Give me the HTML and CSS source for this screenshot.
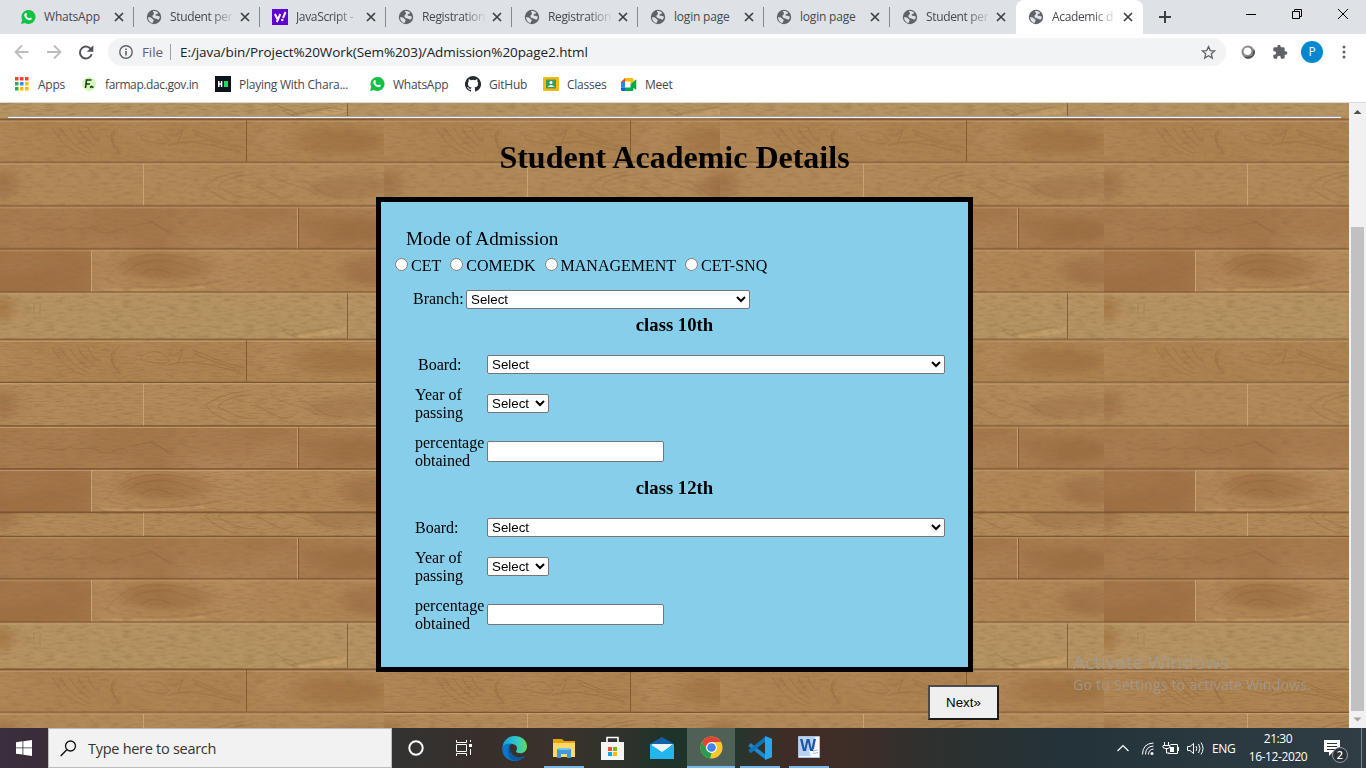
FILE: index.html
```html
<!DOCTYPE html>
<html lang="en">
<head>
<meta charset="utf-8">
<title>Academic details</title>
<link rel="stylesheet" href="styles.css">
</head>
<body>
<svg class="defs" width="0" height="0">
  <defs>
    <symbol id="globe" viewBox="0 0 16 16"><circle cx="8" cy="8" r="7.2" fill="#5f6368"/><path d="M2 8.3C3.6 8 5.2 8.3 6 9.4c.5.9 1.700.7 1.700 1.700 0 1.100-.8 1.600-1 3C3.800 13.700 2 11.200 2 8.300zM6.800 2.200c1.900-.5 4.100.2 5.400 1.500-.5 1.300-1.700.9-2.500 1.700-.6.8.4 1.500 1.500 1.300 1.200-.2 1.600.8 2.700.9-.1 1.200-.4 2.100-1 2.900-1.300.1-2.200-.8-3.500-1.100-1.600-.2-2.900-.8-3-2.200 0-1.200 1-1.500 1.600-2.200.4-.8-.6-1.500-1.200-2.800z" fill="#dee1e6"/></symbol>
    <symbol id="close" viewBox="0 0 10 10"><path d="M1 1l8 8M9 1L1 9" stroke="#3c4043" stroke-width="1.700" fill="none"/></symbol>
    <symbol id="whatsapp" viewBox="0 0 16 16"><path d="M1 15l1.200-4A7 7 0 1 1 5 14z" fill="#12c245"/><path d="M5.300 4.200c.8-.5 1.300.3 1.600 1.200.2.600-.8 1-.5 1.500.6 1.100 1.400 1.900 2.500 2.300.600.2 1-1 1.500-.7 1.400.7 1.600.9 1.300 1.600-.6 1.400-2.300 1.400-3.800.7C5.800 9.800 4.500 8 4.300 6.500c-.1-.9.300-1.800 1-2.300z" fill="#fff"/></symbol>

    <filter id="grain" filterUnits="userSpaceOnUse" x="0" y="0" width="384" height="220">
      <feTurbulence type="fractalNoise" baseFrequency="0.09 0.6" numOctaves="4" seed="8" result="n"/>
      <feColorMatrix in="n" type="matrix" values="0 0 0 0 0.27  0 0 0 0 0.15  0 0 0 0 0.06  1.200 0 0 0 -0.52"/>
    </filter>
    <filter id="cloud" filterUnits="userSpaceOnUse" x="0" y="0" width="384" height="220">
      <feTurbulence type="fractalNoise" baseFrequency="0.011 0.02" numOctaves="2" seed="21" result="n"/>
      <feColorMatrix in="n" type="matrix" values="0 0 0 0 0.500  0 0 0 0 0.290  0 0 0 0 0.130  1.100 0 0 0 -0.44"/>
    </filter>
    <filter id="soft"><feGaussianBlur stdDeviation="7 3"/></filter>
    <g id="planks">
      <rect width="384" height="43" fill="#ad8350"/>
      <rect y="43" width="384" height="44" fill="#b18a58"/>
      <rect y="87" width="384" height="43" fill="#a5784a"/>
      <rect y="130" width="91" height="43" fill="#a07043"/>
      <rect x="91" y="130" width="293" height="43" fill="#b08654"/>
      <rect y="173" width="384" height="47" fill="#b69562"/>
      <g filter="url(#soft)">
        <ellipse cx="335" cy="22" rx="50" ry="12" fill="#97683a" opacity=".5"/>
        <ellipse cx="350" cy="68" rx="42" ry="11" fill="#8d6036" opacity=".5"/>
        <ellipse cx="345" cy="110" rx="45" ry="13" fill="#94653a" opacity=".4"/>
        <ellipse cx="165" cy="147" rx="48" ry="13" fill="#946439" opacity=".5"/>
        <ellipse cx="370" cy="150" rx="28" ry="15" fill="#946439" opacity=".55"/>
        <ellipse cx="3" cy="65" rx="13" ry="14" fill="#94653a" opacity=".6"/>
        <ellipse cx="2" cy="190" rx="12" ry="12" fill="#a4733f" opacity=".8"/>
      </g>
      <g fill="none" stroke="#76502b" stroke-width=".8" opacity=".4">
        <path d="M52 8c9 15 18 24 34 28M60 8c8 13 17 20 29 26M69 8c7 11 14 17 22 22M78 8c5 10 10 14 17 18M88 8c3 8 6 11 12 13M120 6q-15 14 0 28M115 9q-8 10 0 19M141 17q15-10 25 0t-18 5q-9-2-7-5M175 16l8-6-5 13M192 10c20 8 36 16 53 18M194 14c16 7 26 10 42 15M168 26c22-8 40 0 72 6"/>
        <path d="M205 66q15-12 39-14M205 66q14 15 32 17M218 66q12-10 35-11M218 67q20 13 39 12M250 66c16 0 25 17 42 11M270 55c19 13 30 9 47 20M298 60c20 4 16 17 45 17"/>
        <path d="M33 112c14-9 24 5 37-5 11 8 17-4 29 5 13 7 20-10 29 1M130 107l23-5 17 13M149 102l24 12"/>
        <path d="M105 160q20-25 50-25t64 13q30 4 25 7t-31 8-53 5q-35 0-55-8M122 156q14-15 37-15 22 0 41 11M140 155q15-10 30-1"/>
        <path d="M34 184v10M40 184v12M277 205c10 8 14 3 22 12M282 211l15 7M292 215l45-8"/>
      </g>
      <g fill="#d0a870" opacity=".5"><path d="M285 219l55-11 6-2v7l-30 5zM98 168q60 4 104-2l4 3q-50 4-102 2z"/></g>
      <rect width="384" height="220" filter="url(#cloud)"/>
      <rect width="384" height="220" filter="url(#grain)"/>
      <g stroke="#704a2b" stroke-width="1.300" opacity=".8"><path d="M0 .2h384M0 42.800h384M0 86.500h384M0 129.500h384M0 172.700h384M0 219.800h384"/></g>
      <g stroke="#d6ae84" stroke-width="1" opacity=".7"><path d="M0 1.600h384M0 44.300h384M0 87.900h384M0 130.900h384M0 174h384M143.500 44v42M297.500 88v41M91.500 131v41"/></g>
      <g stroke="#6d4726" stroke-width="1" opacity=".65"><path d="M246.500 1v41M298.500 88v41M347.500 174v45"/></g>
    </g>
    <g id="course">
      <use href="#planks"/>
      <svg x="384" width="336" height="220"><use href="#planks"/></svg>
      <use href="#planks" x="720"/>
      <svg x="1104" width="245" height="220"><use href="#planks"/></svg>
    </g>
  </defs>
</svg>

<header class="tabs">
  <div class="tab"><svg class="fav"><use href="#whatsapp"/></svg><span>WhatsApp</span><svg class="x"><use href="#close"/></svg></div>
  <div class="tab"><svg class="fav"><use href="#globe"/></svg><span class="fade">Student per</span><svg class="x"><use href="#close"/></svg></div>
  <div class="tab"><svg class="fav" viewBox="0 0 16 16"><rect width="16" height="16" fill="#5f01d1"/><path d="M3 5l2.400 5M8.300 5L4.800 13" stroke="#fff" stroke-width="2"/><path d="M13.500 3L11 9" stroke="#fff" stroke-width="2"/><circle cx="10.300" cy="11" r="1.200" fill="#fff"/></svg><span class="fade">JavaScript -</span><svg class="x"><use href="#close"/></svg></div>
  <div class="tab"><svg class="fav"><use href="#globe"/></svg><span class="fade">Registration</span><svg class="x"><use href="#close"/></svg></div>
  <div class="tab"><svg class="fav"><use href="#globe"/></svg><span class="fade">Registration</span><svg class="x"><use href="#close"/></svg></div>
  <div class="tab"><svg class="fav"><use href="#globe"/></svg><span>login page</span><svg class="x"><use href="#close"/></svg></div>
  <div class="tab"><svg class="fav"><use href="#globe"/></svg><span>login page</span><svg class="x"><use href="#close"/></svg></div>
  <div class="tab last"><svg class="fav"><use href="#globe"/></svg><span class="fade">Student per</span><svg class="x"><use href="#close"/></svg></div>
  <div class="tab active"><svg class="fav"><use href="#globe"/></svg><span class="fade">Academic d</span><svg class="x"><use href="#close"/></svg></div>
  <svg class="plus" viewBox="0 0 12 12"><path d="M6 0v12M0 6h12" stroke="#3c4043" stroke-width="2"/></svg>
  <svg class="winbtns" width="103" height="28" viewBox="0 0 103 28"><path d="M3 14.500h10" stroke="#000"/><path d="M49.500 11.500h7v7h-7zM51.500 11V9.500h7v7H57M95 9l10 10M105 9L95 19" stroke="#000" fill="none"/></svg>
</header>

<div class="toolbar">
  <svg class="nav" width="90" height="20" viewBox="0 0 90 20"><g fill="none" stroke="#babcbe" stroke-width="1.800"><path d="M21.500 10H9M15 3.500L8.500 10l6.500 6.500M40 10h13M47 3.500l6.500 6.500-6.500 6.500"/></g><path d="M84.800 7.500A6 6 0 1 0 85.200 12" stroke="#50545a" stroke-width="2" fill="none" transform="translate(-.5 .3)" /><path d="M86.300 3v6.500h-6.500z" fill="#50545a" transform="translate(0 .3)"/></svg>
  <div class="omnibox">
    <svg width="14" height="14" viewBox="0 0 14 14"><circle cx="7" cy="7" r="6.200" fill="none" stroke="#5f6368" stroke-width="1.400"/><path d="M7 6v4.500M7 3.500v1.500" stroke="#5f6368" stroke-width="1.600"/></svg>
    <span class="file">File</span><i class="bar"></i><span class="url">E:/java/bin/Project%20Work(Sem%203)/Admission%20page2.html</span>
    <svg class="star" width="15" height="15" viewBox="0 0 16 16"><path d="M8 1.700l1.900 4.200 4.600.4-3.500 3.100 1 4.500-4-2.400-4 2.400 1-4.500L1.500 6.300l4.600-.4z" fill="none" stroke="#5f6368" stroke-width="1.400"/></svg>
  </div>
  <svg class="ext1" width="14" height="14" viewBox="0 0 14 14"><circle cx="7" cy="7" r="6.500" fill="#8a8a8a"/><path d="M13 4A6.500 6.500 0 0 1 3 12l8-1z" fill="#505050"/><circle cx="6.500" cy="6.300" r="3.800" fill="#fff"/></svg>
  <svg class="ext2" width="16" height="16" viewBox="0 0 24 24"><path fill="#5f6368" d="M20.500 11H19V7c0-1.100-.9-2-2-2h-4V3.500a2.500 2.500 0 0 0-5 0V5H4c-1.100 0-2 .9-2 2v3.800h1.500a2.700 2.700 0 0 1 0 5.400H2V20c0 1.100.9 2 2 2h3.800v-1.500a2.700 2.700 0 0 1 5.400 0V22H17c1.100 0 2-.9 2-2v-4h1.500a2.500 2.500 0 0 0 0-5z"/></svg>
  <span class="avatar">P</span>
  <svg class="dots" width="4" height="14" viewBox="0 0 4 14"><g fill="#5f6368"><circle cx="2" cy="2" r="1.500"/><circle cx="2" cy="7" r="1.500"/><circle cx="2" cy="12" r="1.500"/></g></svg>
</div>

<nav class="bookmarks">
  <a class="b1"><svg width="14" height="14" viewBox="0 0 14 14"><path fill="#ea4335" d="M0 0h3.500v3.500H0zM5 0h3.500v3.500H5zM10 0h3.500v3.500H10z"/><path fill="#34a853" d="M0 5h3.500v3.500H0zM0 10h3.500v3.500H0z"/><path fill="#4285f4" d="M5 5h3.500v3.500H5z"/><path fill="#fbbc04" d="M10 5h3.500v3.500H10zM5 10h3.500v3.500H5zM10 10h3.500v3.500H10z"/></svg><span>Apps</span></a>
  <a class="b2"><svg width="14" height="14" viewBox="0 0 14 14"><circle cx="7" cy="7" r="7" fill="#d5f7bb"/><path d="M3.500 11l1-8h5M4 7h4M8 10.500l1.500-1 2 1" stroke="#173f16" stroke-width="1.600" fill="none"/></svg><span>farmap.dac.gov.in</span></a>
  <a class="b3"><svg width="16" height="16" viewBox="0 0 16 16"><path fill="#0e141e" d="M0 0h16v16H0z"/><path d="M3.800 5v6M6.600 5v6M4 8h3" stroke="#fff" stroke-width="1.500"/><path fill="#1dde60" d="M9 5h4v6H9z"/></svg><span>Playing With Chara...</span></a>
  <a class="b4"><svg width="16" height="16"><use href="#whatsapp"/></svg><span>WhatsApp</span></a>
  <a class="b5"><svg width="16" height="16" viewBox="0 0 16 16"><path fill="#24292e" d="M8 0a8 8 0 0 0-2.530 15.590c.4.070.550-.170.550-.380v-1.490c-2.010.370-2.530-.490-2.690-.940-.090-.230-.480-.940-.820-1.130-.280-.150-.680-.520-.010-.530.630-.010 1.080.580 1.230.820.720 1.210 1.870.870 2.330.660.070-.520.280-.870.510-1.070-1.780-.2-3.640-.890-3.640-3.950 0-.870.310-1.590.820-2.150-.080-.2-.360-1.020.080-2.120 0 0 .670-.210 2.200.820a7.400 7.400 0 0 1 4 0c1.530-1.040 2.200-.820 2.200-.820.440 1.100.160 1.920.080 2.120.510.560.820 1.270.820 2.150 0 3.070-1.870 3.750-3.650 3.950.290.250.540.730.540 1.480v2.200c0 .210.150.460.550.380A8 8 0 0 0 8 0z"/></svg><span>GitHub</span></a>
  <a class="b6"><svg width="16" height="14" viewBox="0 0 16 14"><rect width="16" height="14" rx="1" fill="#f8bc08"/><rect x="3" y="2.500" width="10" height="9" fill="#3c9a5c"/><circle cx="8" cy="5.500" r="1.500" fill="#fff"/><path d="M4.500 10q3.500-4 7 0z" fill="#fff"/></svg><span>Classes</span></a>
  <a class="b7"><svg width="16" height="13" viewBox="0 0 16 13"><path fill="#ea4335" d="M0 4l4-4v4z"/><path fill="#fbbc04" d="M4 0h7q1.500 0 1.500 1.500V6l-3 1V3.500H4z"/><path fill="#2684fc" d="M0 4h4v5.500H0z"/><path fill="#0066da" d="M0 9.500h4V13H1.500Q0 13 0 11.500z"/><path fill="#00ac47" d="M4 9.500h5.500v-3l5-4.800q.8-.4.8.4v9q0 .8-.8.300l-2-1.700v2q0 1.300-1.500 1.300H4z"/></svg><span>Meet</span></a>
</nav>

<main class="viewport">
  <div class="page">
    <svg class="wood" width="1349" height="625" viewBox="0 103 1349 625">
      <use href="#course" y="-100.500"/>
      <use href="#course" y="119.500"/>
      <use href="#course" y="449.500"/>
      <svg x="0" y="339.500" width="1349" height="173" viewBox="0 0 1349 173"><use href="#course"/></svg>
      <svg x="0" y="512.500" width="1349" height="24.500" viewBox="0 62.500 1349 24.500"><use href="#course"/></svg>
      <path d="M0 512.700h1349" stroke="#704a2b" stroke-width="1.200" opacity=".7"/>
      <use href="#course" y="669.500"/>
    </svg>
    <div class="content">
      <div class="rule"></div>
      <h1>Student Academic Details</h1>
      <form class="box">
        <p class="mode">Mode of Admission</p>
        <div class="radios">
          <label><input type="radio" name="m">CET</label>
          <label><input type="radio" name="m">COMEDK</label>
          <label><input type="radio" name="m">MANAGEMENT</label>
          <label><input type="radio" name="m">CET-SNQ</label>
        </div>
        <div class="branch"><span>Branch:</span><select><option>Select</option></select></div>
        <section>
          <h3>class 10th</h3>
          <div class="fields">
            <label class="in3">Board:</label><select class="wide"><option>Select</option></select>
            <label>Year of<br>passing</label><select class="short"><option>Select</option></select>
            <label>percentage<br>obtained</label><input class="text" type="text">
          </div>
        </section>
        <section>
          <h3>class 12th</h3>
          <div class="fields">
            <label>Board:</label><select class="wide"><option>Select</option></select>
            <label>Year of<br>passing</label><select class="short"><option>Select</option></select>
            <label>percentage<br>obtained</label><input class="text" type="text">
          </div>
        </section>
      </form>
      <button class="next" type="button">Next»</button>
    </div>
    <div class="watermark"><div class="w1">Activate Windows</div><div class="w2">Go to Settings to activate Windows.</div></div>
  </div>
  <div class="scroll">
    <svg width="17" height="17" viewBox="0 0 17 17"><path d="M4.500 11L8.500 7l4 4z" fill="#505050"/></svg>
    <div class="thumb"></div>
    <svg width="17" height="17" viewBox="0 0 17 17"><path d="M4.500 6.500l4 4 4-4z" fill="#a3a3a3"/></svg>
  </div>
</main>

<footer class="taskbar">
  <div class="start"><svg width="16" height="16" viewBox="0 0 16 16"><path fill="#fff" d="M0 2.200L6.500 1.300v6.200H0zM7.300 1.200L16 0v7.500H7.300zM0 8.300h6.500v6.300L0 13.700zM7.300 8.300H16V16l-8.700-1.200z"/></svg></div>
  <div class="search"><svg width="17" height="17" viewBox="0 0 17 17"><circle cx="10.500" cy="6" r="5" fill="none" stroke="#111" stroke-width="1.300"/><path d="M6.800 9.700L.7 16" stroke="#111" stroke-width="1.400"/></svg><span>Type here to search</span></div>
  <div class="cell c48"><svg width="16" height="16" viewBox="0 0 16 16"><circle cx="8" cy="8" r="6.700" fill="none" stroke="#fff" stroke-width="2"/></svg></div>
  <div class="cell c48"><svg width="17" height="16" viewBox="0 0 17 16"><path d="M.5 0v2.500h10V0M.5 16v-2.500h10V16M.5 4.500h10v7H.5zM14.500 0v2M14.500 9v6" fill="none" stroke="#fff"/><path d="M13 4h3v3h-3z" fill="#fff"/></svg></div>
  <div class="cell gap"><svg width="25" height="25" viewBox="0 0 24 24"><defs><linearGradient id="eg" x1="0" x2="1"><stop stop-color="#159fe0"/><stop offset=".6" stop-color="#33c9c6"/><stop offset="1" stop-color="#67d957"/></linearGradient></defs><path d="M.5 11C1 4.500 6 0 12 0c7 0 12 4.500 12 10 0 4-3 6.500-6.500 6.500-3 0-4.500-1-4-2 1.700-2 1.300-5.500-2.500-6.500C6 7 1 9 .5 13z" fill="url(#eg)"/><path d="M.4 11C2 7.500 6.500 6.500 9.500 7.500 6 9 5.500 13 7.500 16.500c3 5 9.500 6 13.500 2.700l.5.500C18 24 12.500 25 8 23.300 3 21.500-.4 17 .4 11z" fill="#0a78c8"/><path d="M9.500 8.500c-3 2-2.500 7 1.500 10s8.500 2 10.500.5C19 24 12 25 8.500 22 4.500 18.500 5 11 9.500 8.500z" fill="#0c59a4"/></svg></div>
  <div class="cell run"><svg width="22" height="19" viewBox="0 0 22 19"><path fill="#e5a312" d="M0 0h9l2 2h11v5H0z"/><path fill="#ffd868" d="M0 4h22v14H0z"/><path fill="#3f9bd8" d="M4 10h14v9h-4v-4H8v4H4z"/><path fill="#79c4ef" d="M5 9h12v2H5z"/></svg></div>
  <div class="cell"><svg width="23" height="24" viewBox="0 0 23 24"><path d="M6 8V1.500h11V8" stroke="#fff" stroke-width="1.600" fill="none"/><path fill="#f5f5f5" d="M0 6h23v18H0z"/><path fill="#f25022" d="M7 11h4v4H7z"/><path fill="#7fba00" d="M12 11h4v4h-4z"/><path fill="#00a4ef" d="M7 16h4v4H7z"/><path fill="#ffb900" d="M12 16h4v4h-4z"/></svg></div>
  <div class="cell"><svg width="24" height="22" viewBox="0 0 24 22"><path fill="#1063aa" d="M0 7l12-7 12 7v5H0z"/><path fill="#fff" d="M1 8l22-1-11 9z"/><path fill="#22b5ee" d="M0 7l12 8 12-8v15H0z"/><path fill="#66d0f6" d="M0 22l14-10 10-5z" opacity=".25"/><path fill="#eaf4fa" d="M1 7h22l-11 7z"/></svg></div>
  <div class="cell on"><svg width="23" height="23" viewBox="0 0 24 24"><circle cx="12" cy="12" r="11.500" fill="#fbc629"/><path d="M12 12L7 14.500 2 6.300A11.500 11.500 0 0 1 22 6.300H12z" fill="#e04436"/><path d="M2 6.300l5.300 8.500L12 17.500l-1.500 5.900A11.500 11.500 0 0 1 2 6.300z" fill="#249c51"/><circle cx="12" cy="12" r="5.700" fill="#fff"/><circle cx="12" cy="12" r="4.500" fill="#4385ee"/></svg></div>
  <div class="cell run"><svg width="24" height="24" viewBox="0 0 24 24"><path d="M1.500 8.500L18 21.500" stroke="#168ad3" stroke-width="3.800"/><path d="M1.500 15.700L18 2.500" stroke="#0f75b9" stroke-width="3.800"/><path d="M17 0l7 2.700v18.600L17 24z" fill="#29a4ee"/></svg></div>
  <div class="cell run word"><svg width="22" height="22" viewBox="0 0 22 22"><path fill="#f4f8fd" stroke="#a9c3e6" d="M.5.500h21v21H.5z"/><path fill="#b9d2f0" d="M1 1h16v19H1z"/><path fill="#fff" d="M11 14l10-2v9H13z"/><path d="M15 15l5-1M15 17.500l5-1" stroke="#a6bad3"/></svg><b class="w">W</b></div>
  <div class="tray">
    <svg width="94" height="18" viewBox="1114 0 94 18"><g fill="none" stroke="#fff" stroke-width="1.200"><path d="M1117.500 12l5.500-5.500 5.500 5.500"/><path d="M1142.500 15.500q0-11 11-11.500M1145.500 15.500q0-8 8-8.500M1148.500 15.500q0-5 5-5.500" stroke-width="1"/><path d="M1164.500 3v3M1168.500 3v3M1163 6.500h7v2q-3.500 3-7 0zM1166.500 9v5h3M1170.500 5.500h7v9h-9M1178.500 8v4" stroke-width="1"/><path d="M1187.500 7.500h2.500l3.500-3v10l-3.500-3h-2.500zM1196 7q1.500 2.500 0 5M1198.500 5q3 4.500 0 9M1201 3.500q4 6 0 12" stroke-width="1"/></g><circle cx="1152" cy="14.500" r="1.500" fill="#fff"/><path d="M1170 8h4v5h-4z" fill="#fff"/></svg>
    <span class="eng">ENG</span>
    <div class="clock"><span>21:30</span><span>16-12-2020</span></div>
    <div class="note"><svg width="18" height="17" viewBox="0 0 18 17"><path fill="#fff" d="M0 0h16v12H9l-4 4v-4H0z"/><path d="M3 3.500h10M3 6.500h10M3 9.500h10" stroke="#29333a"/></svg><b>2</b></div>
  </div>
</footer>
</body>
</html>
```
FILE: styles.css
```css
* { box-sizing: border-box; }
body { margin: 0; width: 1366px; height: 768px; overflow: hidden; display: flex; flex-direction: column; font-family: "Open Sans", "Noto Sans", sans-serif; background: #fff; }
.defs { position: absolute; }
svg { display: block; flex: none; }

.tabs { height: 34px; background: #dee1e6; display: flex; padding-left: 8px; flex: none; }
.tab { width: 126px; height: 34px; display: flex; align-items: center; padding: 0 10px 0 12px; font-size: 12px; letter-spacing: -.2px; color: #45494d; background: linear-gradient(#85888c, #85888c) right 7px / 1px 20px no-repeat; flex: none; }
.tab.last { background: none; }
.tab.active { background: #fff; width: 127px; border-radius: 8px 8px 0 0; }
.fav { width: 16px; height: 16px; }
.tab span { width: 65px; margin-left: 8px; white-space: pre; line-height: 18px; }
.fade { -webkit-mask-image: linear-gradient(90deg, #000 40px, transparent 65px); mask-image: linear-gradient(90deg, #000 40px, transparent 65px); }
.tab .fade { letter-spacing: -.35px; }
.x { width: 10px; height: 10px; margin-left: 6px; }
.plus { width: 12px; height: 12px; margin: 11px 0 0 16px; }
.winbtns { margin-left: 72px; overflow: visible; }

.toolbar { height: 36px; display: flex; align-items: center; flex: none; padding-left: 7px; }
.omnibox { width: 1118px; height: 28px; margin-left: 11px; border-radius: 14px; background: #f1f3f4; display: flex; align-items: center; padding-left: 11px; font-size: 13.500px; color: #202124; flex: none; }
.file { color: #5f6368; margin-left: 9px; width: 28px; letter-spacing: -.1px; }
.bar { width: 1px; height: 16px; background: #9aa0a6; }
.url { margin-left: 9px; letter-spacing: -.08px; white-space: nowrap; }
.star { margin-left: auto; margin-right: 10px; }
.ext1 { margin-left: 15px; }
.ext2 { margin-left: 17px; }
.avatar { width: 22px; height: 22px; border-radius: 50%; background: #0288d1; color: #fff; font-size: 12px; line-height: 22px; text-align: center; margin-left: 13px; }
.dots { margin-left: 19px; }

.bookmarks { height: 33px; border-bottom: 1px solid #d7dae0; display: flex; flex: none; align-items: flex-start; font-size: 12px; letter-spacing: -.25px; color: #45494d; }
.bookmarks a { display: flex; align-items: center; height: 28px; white-space: nowrap; flex: none; }
.b1 { width: 68px; padding-left: 15px; }
.b1 span { margin-left: 9px; }
.b2 { width: 132px; padding-left: 14px; margin-right: 15px; }
.b2 span { margin-left: 9px; letter-spacing: -.4px; }
.b3 { width: 154px; }
.b3 span, .b5 span, .b6 span, .b7 span { margin-left: 8px; }
.b4 { width: 96px; }
.b4 span { margin-left: 8px; }
.b5 { width: 78px; }
.b6 { width: 78px; }

.viewport { height: 625px; display: flex; flex: none; }
.page { width: 1349px; position: relative; overflow: hidden; background: #a57c48; font-family: "Liberation Serif", serif; color: #000; }
.wood { position: absolute; left: 0; top: 0; }
.content { position: relative; display: flex; flex-direction: column; align-items: center; padding-top: 13px; }
.rule { width: 1333px; height: 2px; border-top: 1px solid #9ea0a8; border-bottom: 1px solid #f3f3f3; }
h1 { margin: 21px 0 0; font-size: 32px; line-height: 37px; height: 58px; }
.box { width: 597px; height: 475px; border: 5px solid #000; background: #87ceeb; font-size: 16px; line-height: 18px; padding-top: 26px; }
.mode { margin: 0 0 0 25px; font-size: 19.200px; line-height: 22px; }
.radios { display: flex; height: 22px; margin: 5px 0 0 14px; }
.radios label { display: flex; align-items: center; }
.radios label + label { margin-left: 9px; }
.radios input { width: 13px; height: 13px; margin: -3px 3px 0 0; }
.branch { display: flex; align-items: center; height: 19px; margin: 13px 0 5px 32px; }
.branch span { width: 53px; margin-top: -1px; }
select { height: 19px; margin: 0; font: 13.333px "Liberation Sans", sans-serif; border: 1px solid #767676; border-radius: 2px; background-color: #fff; color: #000; padding: 0; }
.branch select { width: 284px; }
section { height: 163px; }
h3 { margin: 0 0 20px; font-size: 18.720px; line-height: 21px; text-align: center; }
.fields { display: grid; grid-template-columns: 72px 458px; grid-template-rows: 19px 36px 36px; row-gap: 12px; align-items: center; margin-left: 34px; }
.in3 { padding-left: 3px; }
.short { width: 62px; margin-bottom: 2px; }
.text { width: 177px; height: 21px; border: 1px solid #767676; border-radius: 2px; background: #fff; margin-bottom: 2px; }
.next { width: 71px; height: 35px; margin: 13px 0 0 578px; font: 13.333px "Liberation Sans", sans-serif; background: #efefef; border: 2px solid; border-color: #4a4a4a #1c1c1c #1c1c1c #4a4a4a; border-radius: 0; color: #000; padding: 0; }
.watermark { position: absolute; left: 1073px; top: 546px; color: rgba(160,155,148,.85); font-family: "Open Sans", sans-serif; white-space: nowrap; }
.w1 { font-size: 19px; line-height: 26px; }
.w2 { font-size: 14px; line-height: 20px; letter-spacing: .25px; }
.scroll { width: 17px; background: #f1f1f1; display: flex; flex-direction: column; align-items: center; }
.thumb { width: 13px; height: 484px; margin: 107px 0 0; background: #c1c1c1; }

.taskbar { height: 40px; flex: none; display: flex; color: #fff; background: linear-gradient(90deg, #3b2e3e 0, #392d38 48px, #333331 392px, #382f2b 480px, #3b322c 560px, #2c332b 630px, #1d3329 670px, #24362d 735px, #3f2c27 785px, #402d27 840px, #2b3130 950px, #24333a 1080px, #303d45 1366px); }
.start { width: 48px; display: flex; align-items: center; justify-content: center; }
.search { width: 344px; background: #f2f2f2; border: 1px solid #bdbdbd; display: flex; align-items: center; padding-left: 11px; color: #333; font-size: 14.500px; }
.search span { margin-left: 11px; letter-spacing: -.28px; }
.cell { width: 49px; display: flex; align-items: center; justify-content: center; position: relative; }
.c48 { width: 48px; }
.gap { margin-left: 2px; }
.run { background: linear-gradient(#76b9ed, #76b9ed) center bottom / 40px 2px no-repeat; }
.on { width: 48px; margin: 0 0 0 1px; background: #4f6056; border-bottom: 2px solid #76b9ed; }
.word svg { margin-bottom: 2px; }
.w { position: absolute; left: 16px; top: 7px; width: 17px; font: bold 17px/22px "Liberation Sans", sans-serif; color: #1d55a5; }
.tray { margin-left: auto; display: flex; align-items: center; width: 252px; font-size: 12px; border-right: 1px solid #7c868c; margin-right: 4px; }
.tray > svg { margin-left: 4px; }
.eng { margin-left: 4px; width: 26px; letter-spacing: -.3px; }
.clock { width: 76px; margin-left: 2px; display: flex; flex-direction: column; align-items: center; line-height: 18px; letter-spacing: -.4px; }
.note { position: relative; margin-left: 8px; width: 22px; }
.note b { position: absolute; left: 8px; top: 7px; width: 16px; height: 16px; border: 1px solid #99a; border-radius: 50%; background: #2b3338; font-size: 11px; line-height: 14px; text-align: center; font-weight: 600; }
```
